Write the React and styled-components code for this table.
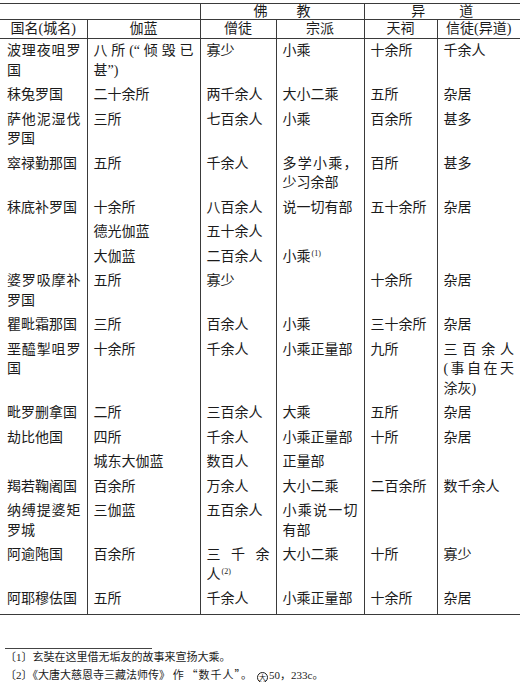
import React from "react";
import styled, { createGlobalStyle } from "styled-components";

const GlobalStyle = createGlobalStyle`
  html, body {
    margin: 0;
    padding: 0;
    background: #fff;
  }
  body {
    font-family: "Liberation Serif", "Noto Sans CJK SC", serif;
    color: #1b1b1b;
  }
`;

const Page = styled.main`
  width: 520px;
  padding-top: 3px;
`;

const Table = styled.table`
  width: 520px;
  table-layout: fixed;
  border-collapse: collapse;
  border-top: 1px solid #3a3a3a;
  border-bottom: 1px solid #3a3a3a;
  font-size: 14px;
`;

const Col = styled.col`
  width: ${(p) => p.$w}px;
`;

const GroupCell = styled.th`
  font-weight: 400;
  height: 15px;
  line-height: 15px;
  padding: 0;
  text-align: center;
  border-bottom: 1px solid #3a3a3a;
  border-left: ${(p) => (p.$first ? "none" : "1px solid #3a3a3a")};
`;

const HeadCell = styled.th`
  font-weight: 400;
  height: 18px;
  line-height: 18px;
  padding: 0;
  text-align: center;
  white-space: nowrap;
  border-bottom: 1px solid #3a3a3a;
  border-left: ${(p) => (p.$first ? "none" : "1px solid #3a3a3a")};
`;

const Spaced = styled.span`
  letter-spacing: ${(p) => p.$gap}px;
  margin-right: -${(p) => p.$gap}px;
`;

const Row = styled.tr`
  &:last-child td {
    padding-bottom: 5px;
  }
`;

const Cell = styled.td`
  vertical-align: top;
  padding: 2px 6px 3px ${(p) => (p.$first ? 7 : 6)}px;
  line-height: 19.5px;
  border-left: ${(p) => (p.$first ? "none" : "1px solid #3a3a3a")};
`;

const Line = styled.span`
  display: block;
  white-space: nowrap;
  text-align: ${(p) => (p.$spread ? "justify" : "left")};
  text-align-last: ${(p) => (p.$spread ? "justify" : "left")};
`;

const Note = styled.sup`
  font-size: 8px;
  line-height: 0;
  vertical-align: 5px;
  margin-left: 1px;
  font-family: "Liberation Serif", serif;
`;

const Footnotes = styled.section`
  margin-top: 33px;
`;

const FootRule = styled.div`
  width: 147px;
  margin-left: 5px;
  border-top: 1px solid #444;
`;

const FootLine = styled.p`
  margin: 0;
  padding-left: 5px;
  font-size: 11px;
  line-height: 17px;
  white-space: nowrap;
`;

const Cjk = styled.span`
  font-family: "Noto Sans CJK SC", sans-serif;
  letter-spacing: ${(p) => p.$track || 0}px;
`;

const Circled = styled.span`
  display: inline-flex;
  align-items: center;
  justify-content: center;
  width: 9px;
  height: 9px;
  margin: 0 1px 0 4px;
  border: 1px solid #1b1b1b;
  border-radius: 50%;
  font-size: 7px;
  line-height: 1;
  vertical-align: -1px;
  font-family: "Noto Sans CJK SC", sans-serif;
`;

const widths = [87, 113, 76, 88, 73, 83];

const rows = [
  [["波理夜咀罗", "国"], ["八所(“倾毁已", "甚”)"], "寡少", "小乘", "十余所", "千余人"],
  ["秣兔罗国", "二十余所", "两千余人", "大小二乘", "五所", "杂居"],
  [["萨他泥湿伐", "罗国"], "三所", "七百余人", "小乘", "百余所", "甚多"],
  ["窣禄勤那国", "五所", "千余人", ["多学小乘，", "少习余部"], "百所", "甚多"],
  ["秣底补罗国", "十余所", "八百余人", "说一切有部", "五十余所", "杂居"],
  ["", "德光伽蓝", "五十余人", "", "", ""],
  ["", "大伽蓝", "二百余人", <>小乘<Note>(1)</Note></>, "", ""],
  [["婆罗吸摩补", "罗国"], "五所", "寡少", "", "十余所", "杂居"],
  ["瞿毗霜那国", "三所", "百余人", "小乘", "三十余所", "杂居"],
  [["垩醯掣咀罗", "国"], "十余所", "千余人", "小乘正量部", "九所", ["三百余人", "(事自在天", "涂灰)"]],
  ["毗罗删拿国", "二所", "三百余人", "大乘", "五所", "杂居"],
  ["劫比他国", "四所", "千余人", "小乘正量部", "十所", "杂居"],
  ["", "城东大伽蓝", "数百人", "正量部", "", ""],
  ["羯若鞠阇国", "百余所", "万余人", "大小二乘", "二百余所", "数千余人"],
  [["纳缚提婆矩", "罗城"], "三伽蓝", "五百余人", ["小乘说一切", "有部"], "", ""],
  ["阿逾陁国", "百余所", ["三千余", <>人<Note>(2)</Note></>], "大小二乘", "十所", "寡少"],
  ["阿耶穆佉国", "五所", "千余人", "小乘正量部", "十余所", "杂居"],
];

function CellLines({ value }) {
  const lines = Array.isArray(value) ? value : [value];
  return lines.map((line, i) => (
    <Line key={i} $spread={i < lines.length - 1}>
      {line}
    </Line>
  ));
}

export default function App() {
  return (
    <Page>
      <GlobalStyle />
      <Table>
        <colgroup>
          {widths.map((w, i) => (
            <Col key={i} $w={w} />
          ))}
        </colgroup>
        <thead>
          <tr>
            <GroupCell colSpan={2} $first />
            <GroupCell colSpan={2}>
              <Spaced $gap={29}>佛教</Spaced>
            </GroupCell>
            <GroupCell colSpan={2}>
              <Spaced $gap={34}>异道</Spaced>
            </GroupCell>
          </tr>
          <tr>
            <HeadCell $first>国名(城名)</HeadCell>
            <HeadCell>伽蓝</HeadCell>
            <HeadCell>僧徒</HeadCell>
            <HeadCell>宗派</HeadCell>
            <HeadCell>天祠</HeadCell>
            <HeadCell>信徒(异道)</HeadCell>
          </tr>
        </thead>
        <tbody>
          {rows.map((row, r) => (
            <Row key={r}>
              {row.map((value, c) => (
                <Cell key={c} $first={c === 0}>
                  <CellLines value={value} />
                </Cell>
              ))}
            </Row>
          ))}
        </tbody>
      </Table>
      <Footnotes>
        <FootRule />
        <FootLine>〔1〕玄奘在这里借无垢友的故事来宣扬大乘。</FootLine>
        <FootLine>
          〔2〕<Cjk>《大唐大慈恩寺三藏法师传》</Cjk> 作 <Cjk $track={1}>“数千人”。</Cjk>
          <Circled>大</Circled>50<Cjk>，</Cjk>233c<Cjk>。</Cjk>
        </FootLine>
      </Footnotes>
    </Page>
  );
}
